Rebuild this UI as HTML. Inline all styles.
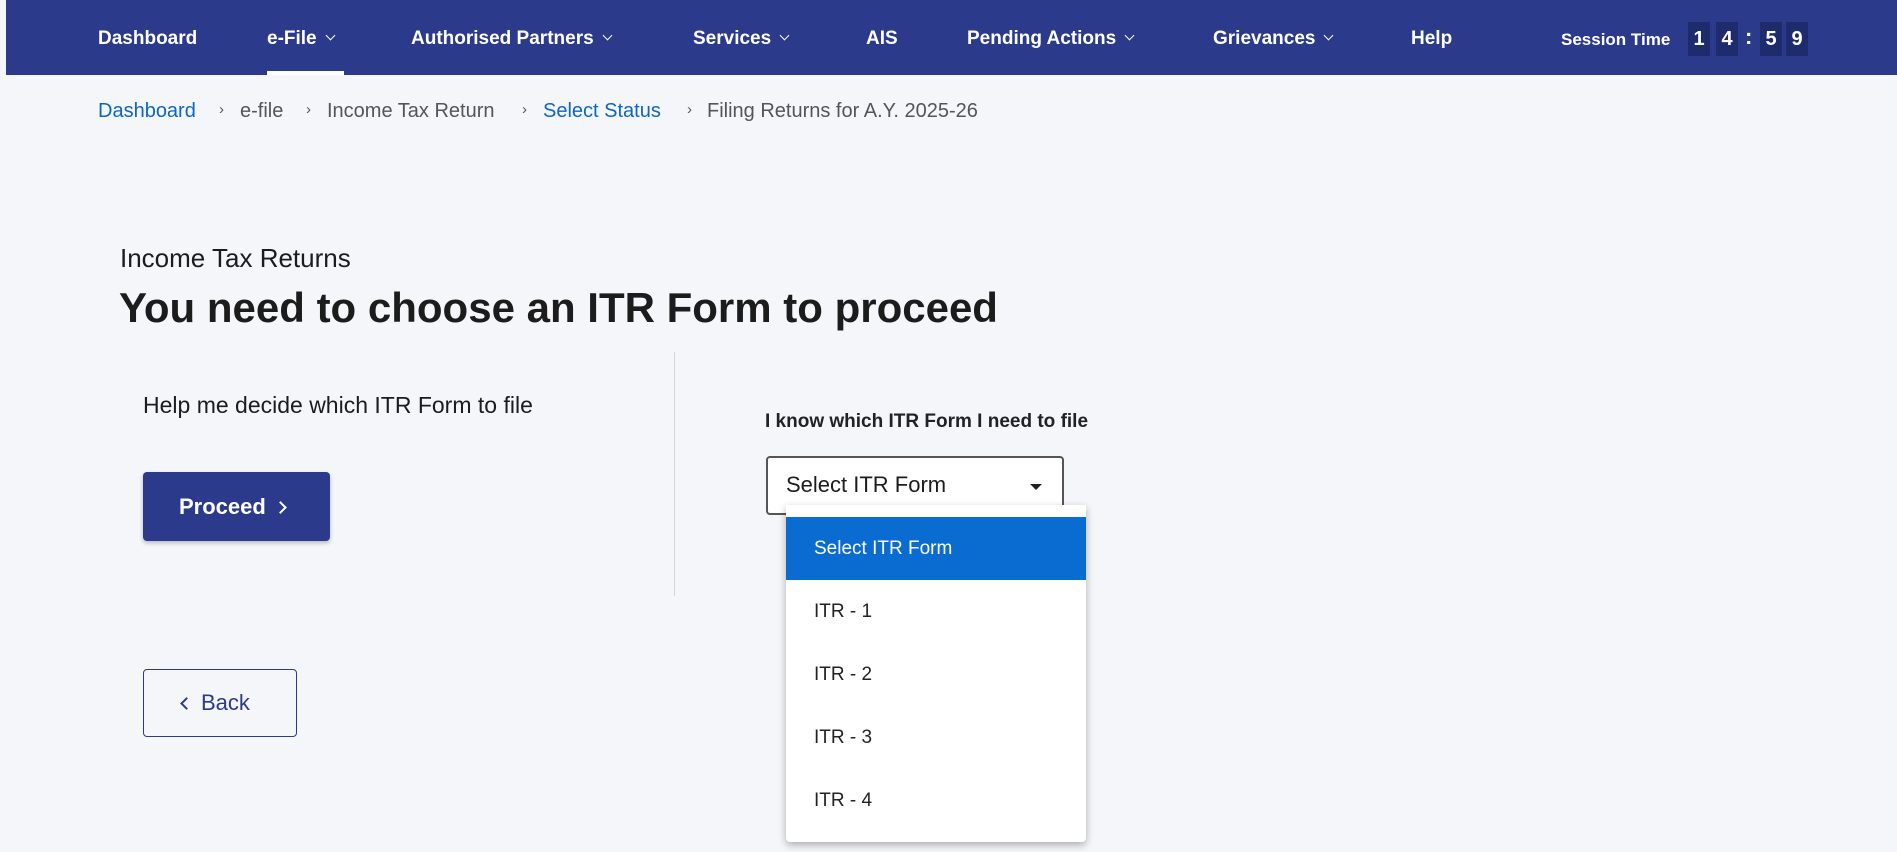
<!DOCTYPE html>
<html><head><meta charset="utf-8"><style>
*{box-sizing:border-box;margin:0;padding:0}
body{width:1897px;height:852px;background:#f5f6fa;font-family:"Liberation Sans",sans-serif;position:relative;overflow:hidden;color:#1c1c1c}
.abs{position:absolute;white-space:nowrap}
.hdr{position:absolute;left:6px;top:0;width:1891px;height:75px;background:#2b3a8b}
.nav{position:absolute;top:28px;color:#fff;font-weight:bold;font-size:19px;white-space:nowrap}
.nav .c{display:inline-block;width:7px;height:7px;border-right:1.5px solid #fff;border-bottom:1.5px solid #fff;transform:rotate(45deg);margin-left:10px;position:relative;top:-5px}
.dig{position:absolute;top:22px;width:22px;height:34px;background:#1e2b6c;color:#fff;font-weight:bold;font-size:20px;text-align:center;line-height:34px}
.bc{position:absolute;top:100px;font-size:20px;color:#555;white-space:nowrap}
.bc.b{color:#0b66c6}
.sep{position:absolute;top:101px;font-size:15px;color:#555}
.dd{position:absolute;left:786px;top:505px;width:300px;height:337px;background:#fff;box-shadow:0 3px 8px rgba(0,0,0,.3);border-radius:0 0 4px 4px}
.it{position:absolute;left:0;width:300px;height:63px;line-height:63px;padding-left:28px;font-size:19px;color:#222}
</style></head><body>
<div class="hdr"></div>
<div style="position:absolute;left:267px;top:71px;width:77px;height:4px;background:#fff"></div>
<div class="nav" style="left:98px">Dashboard</div>
<div class="nav" style="left:267px">e-File<span class="c"></span></div>
<div class="nav" style="left:411px">Authorised Partners<span class="c"></span></div>
<div class="nav" style="left:693px">Services<span class="c"></span></div>
<div class="nav" style="left:866px">AIS</div>
<div class="nav" style="left:967px">Pending Actions<span class="c"></span></div>
<div class="nav" style="left:1213px">Grievances<span class="c"></span></div>
<div class="nav" style="left:1411px">Help</div>
<div class="nav" style="left:1561px;top:30px;font-size:17px">Session Time</div>
<div class="dig" style="left:1688px">1</div>
<div class="dig" style="left:1716px">4</div>
<div class="abs" style="left:1745px;top:24px;color:#fff;font-weight:bold;font-size:22px">:</div>
<div class="dig" style="left:1760px">5</div>
<div class="dig" style="left:1786px">9</div>

<div class="bc b" style="left:98px">Dashboard</div>
<div class="sep" style="left:219px">›</div>
<div class="bc" style="left:240px">e-file</div>
<div class="sep" style="left:306px">›</div>
<div class="bc" style="left:327px">Income Tax Return</div>
<div class="sep" style="left:522px">›</div>
<div class="bc b" style="left:543px">Select Status</div>
<div class="sep" style="left:687px">›</div>
<div class="bc" style="left:707px">Filing Returns for A.Y. 2025-26</div>

<div class="abs" style="left:120px;top:243px;font-size:26px;color:#1c1c1c">Income Tax Returns</div>
<div class="abs" style="left:119px;top:284px;font-size:42px;font-weight:bold;color:#1c1c1c;letter-spacing:0px">You need to choose an ITR Form to proceed</div>

<div style="position:absolute;left:674px;top:352px;width:1px;height:244px;background:#d5d7dd"></div>
<div class="abs" style="left:143px;top:392px;font-size:23px">Help me decide which ITR Form to file</div>
<div style="position:absolute;left:143px;top:472px;width:187px;height:69px;background:#2b3a8b;border-radius:4px;box-shadow:0 2px 4px rgba(0,0,0,.25);color:#fff;font-weight:bold;font-size:22px;line-height:69px;padding-left:36px">Proceed <span style="display:inline-block;width:9px;height:9px;border-right:2.5px solid #fff;border-top:2.5px solid #fff;transform:rotate(45deg);margin-left:4px;position:relative;top:-2px"></span></div>
<div style="position:absolute;left:143px;top:669px;width:154px;height:68px;border:1px solid #2b3a8b;border-radius:4px;color:#2b3a8b;font-size:22px;line-height:66px;padding-left:38px"><span style="display:inline-block;width:9px;height:9px;border-left:2.5px solid #2b3a8b;border-bottom:2.5px solid #2b3a8b;transform:rotate(45deg);margin-right:10px;position:relative;top:-2px"></span>Back</div>

<div class="abs" style="left:765px;top:411px;font-size:19px;font-weight:bold;color:#222">I know which ITR Form I need to file</div>
<div style="position:absolute;left:766px;top:456px;width:298px;height:59px;border:2px solid #555;border-radius:4px;background:#fff"></div>
<div class="abs" style="left:786px;top:472px;font-size:22px;color:#1c1c1c">Select ITR Form</div>
<div style="position:absolute;left:1030px;top:484px;width:0;height:0;border-left:6px solid transparent;border-right:6px solid transparent;border-top:6px solid #222"></div>
<div class="dd">
<div class="it" style="top:12px;background:#0a6bd0;color:#fff">Select ITR Form</div>
<div class="it" style="top:75px">ITR - 1</div>
<div class="it" style="top:138px">ITR - 2</div>
<div class="it" style="top:201px">ITR - 3</div>
<div class="it" style="top:264px">ITR - 4</div>
</div>
</body></html>
